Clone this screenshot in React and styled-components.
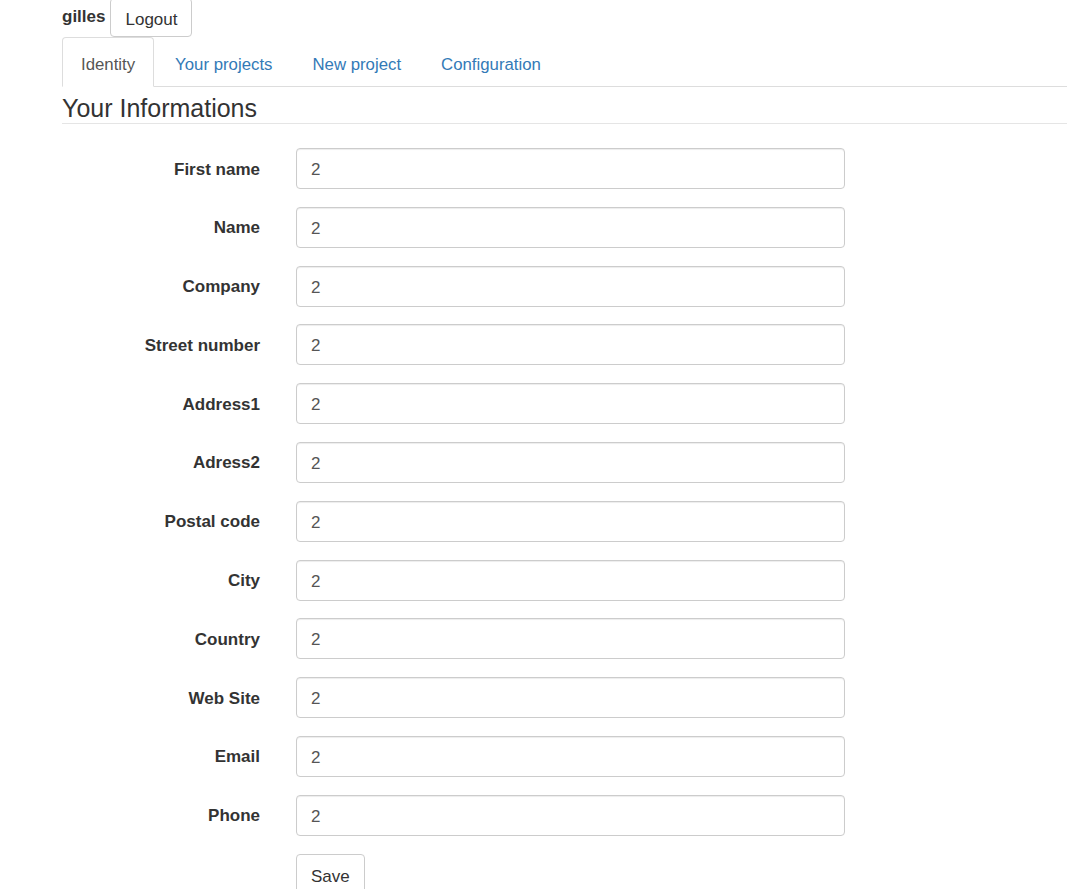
import React from "react"
import styled, { createGlobalStyle } from "styled-components"

const GlobalStyle = createGlobalStyle`
  html, body {
    margin: 0;
    padding: 0;
    background: #fff;
  }
  body {
    font-family: "Liberation Sans", Arial, sans-serif;
    font-size: 17px;
    color: #333;
    overflow: hidden;
  }
`

const fields = [
  "First name",
  "Name",
  "Company",
  "Street number",
  "Address1",
  "Adress2",
  "Postal code",
  "City",
  "Country",
  "Web Site",
  "Email",
  "Phone",
]

const tabs = ["Identity", "Your projects", "New project", "Configuration"]

const App = () => {
  return (
    <>
      <GlobalStyle />
      <Page>
        <UserBar>
          <UserName>gilles</UserName>
          <Button $top>Logout</Button>
        </UserBar>
        <Tabs>
          {tabs.map((t, i) => (
            <Tab key={t} $active={i === 0}>
              {t}
            </Tab>
          ))}
        </Tabs>
        <Heading>Your Informations</Heading>
        <Form>
          {fields.map((f) => (
            <Row key={f}>
              <Label>{f}</Label>
              <Input defaultValue="2" />
            </Row>
          ))}
          <Row>
            <span />
            <div>
              <Button>Save</Button>
            </div>
          </Row>
        </Form>
      </Page>
    </>
  )
}

export default App

const Page = styled.div`
  padding-left: 62px;
`

const UserBar = styled.div`
  display: flex;
  align-items: flex-start;
  height: 37px;
  gap: 5px;
`

const UserName = styled.span`
  font-weight: bold;
  margin-top: 7px;
  line-height: 20px;
`

const Button = styled.button`
  font-family: inherit;
  font-size: 17px;
  color: #333;
  background: #fff;
  border: 1px solid #ccc;
  border-radius: 4px;
  padding: ${(p) => (p.$top ? "4px 14px 0" : "5px 14px 0")};
  height: ${(p) => (p.$top ? "39px" : "41px")};
  line-height: 24px;
  margin-top: ${(p) => (p.$top ? "-2px" : "0")};
`

const Tabs = styled.div`
  display: flex;
  border-bottom: 1px solid #ddd;
  height: 49px;
`

const Tab = styled.div`
  padding: 0 18px;
  margin-right: 2px;
  line-height: 53px;
  font-size: 16.8px;
  box-sizing: border-box;
  color: ${(p) => (p.$active ? "#555" : "#337ab7")};
  border: 1px solid ${(p) => (p.$active ? "#ddd" : "transparent")};
  border-bottom-color: ${(p) => (p.$active ? "#fff" : "transparent")};
  border-radius: 4px 4px 0 0;
  background: ${(p) => (p.$active ? "#fff" : "transparent")};
  margin-bottom: -1px;
  height: 50px;
`

const Heading = styled.h3`
  font-size: 25px;
  font-weight: 400;
  margin: 0;
  padding: 7px 0 1px;
  line-height: 28px;
  border-bottom: 1px solid #e5e5e5;
`

const Form = styled.div`
  display: flex;
  flex-direction: column;
  gap: 17.8px;
  padding-top: 24px;
`

const Row = styled.div`
  display: grid;
  grid-template-columns: 198px 549px;
  column-gap: 36px;
  align-items: center;
`

const Label = styled.label`
  text-align: right;
  font-weight: bold;
  padding-top: 2px;
`

const Input = styled.input`
  box-sizing: border-box;
  height: 41px;
  width: 100%;
  padding: 3px 14px 0;
  font-family: inherit;
  font-size: 17px;
  color: #555;
  border: 1px solid #ccc;
  border-radius: 4px;
  box-shadow: inset 0 1px 1px rgba(0, 0, 0, 0.075);
  outline: none;
`
